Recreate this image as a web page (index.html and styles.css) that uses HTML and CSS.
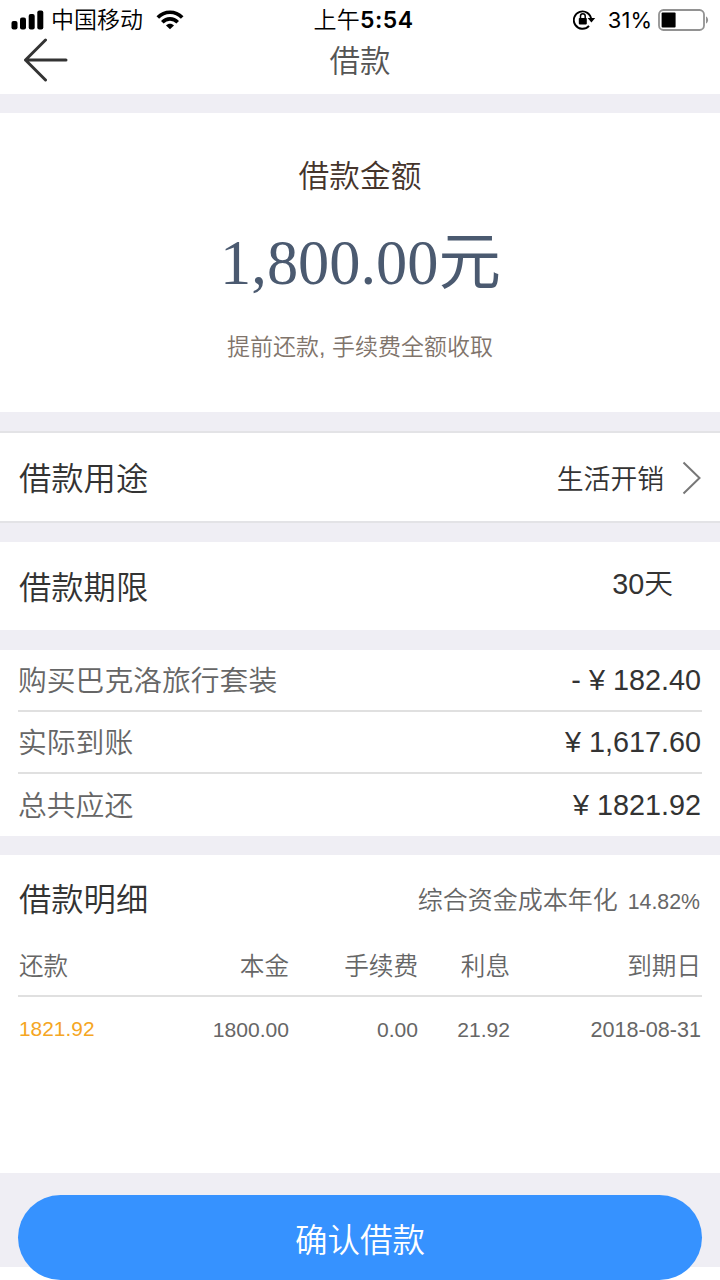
FILE: index.html
```html
<!DOCTYPE html>
<html lang="zh-CN">
<head>
<meta charset="utf-8">
<title>借款</title>
<link rel="stylesheet" href="styles.css">
</head>
<body>
<div class="app">
  <div class="status">
    <div class="status-left">
      <svg class="signal" width="33" height="20" viewBox="0 0 33 20"><rect x="0.500" y="11" width="6" height="8.500" rx="2"/><rect x="9" y="7.500" width="6" height="12" rx="2"/><rect x="17.700" y="4" width="6" height="15.500" rx="2"/><rect x="26.300" y="0.500" width="6" height="19" rx="2"/></svg>
      <span class="carrier">中国移动</span>
      <svg class="wifi" width="28" height="20" viewBox="0 0 28 20" fill="none" stroke="#000" stroke-width="3.600"><path d="M1.800 7.600C8.600.4 19.400.4 26.200 7.600"/><path d="M6.300 12.200C10.700 7.700 17.300 7.700 21.700 12.200"/><path d="M14 19.300l-4-3.900c2.200-2.200 5.800-2.200 8 0z" fill="#000" stroke="none"/></svg>
    </div>
    <div class="clock">上午<b>5:54</b></div>
    <div class="status-right">
      <svg class="lock" width="23" height="22" viewBox="0 0 23 22"><path d="M16 16.900A8.700 8.700 0 1 1 18.200 10.500" fill="none" stroke="#000" stroke-width="1.900"/><path d="M14.600 9h7.600l-3.800 4.600z"/><rect x="5.800" y="8.900" width="8" height="6.500" rx=".8"/><path d="M7.500 9.200V7.100a2.350 2.350 0 0 1 4.700 0v2.100" fill="none" stroke="#000" stroke-width="1.500"/></svg>
      <span class="percent">31%</span>
      <svg class="battery" width="52" height="22" viewBox="0 0 52 22"><rect x="1" y="1" width="45" height="20" rx="4.500" fill="#fff" stroke="#929292" stroke-width="1.800"/><rect x="3.600" y="3.500" width="14" height="15" rx="1"/><path d="M48 7.500c2.800 1.200 2.800 5.800 0 7z" fill="#929292"/></svg>
    </div>
  </div>
  <header class="nav">
    <svg class="back" width="46" height="44" viewBox="0 0 46 44" fill="none" stroke="#333" stroke-width="3" stroke-linecap="round" stroke-linejoin="round"><path d="M22.500 2 2.500 22l20 20M2.500 22H43"/></svg>
    <h1 class="title">借款</h1>
  </header>

  <section class="amount">
    <div class="amount-label">借款金额</div>
    <div class="amount-value">1,800.00元</div>
    <div class="amount-note">提前还款, 手续费全额收取</div>
  </section>

  <section class="row purpose">
    <span class="label">借款用途</span>
    <span class="choice">生活开销</span>
    <svg class="chevron" width="20" height="34" viewBox="0 0 20 34" fill="none" stroke="#777" stroke-width="2"><path d="M1.500 1.500 17.500 17l-16 15.500"/></svg>
  </section>

  <section class="row term">
    <span class="label">借款期限</span>
    <span class="days">30天</span>
  </section>

  <section class="summary">
    <div class="line"><span class="name">购买巴克洛旅行套装</span><span class="money">- ¥ 182.40</span></div>
    <div class="line"><span class="name">实际到账</span><span class="money">¥ 1,617.60</span></div>
    <div class="line"><span class="name">总共应还</span><span class="money">¥ 1821.92</span></div>
  </section>

  <section class="detail">
    <div class="detail-head">
      <span class="label">借款明细</span>
      <span class="rate">综合资金成本年化 <span class="num">14.82%</span></span>
    </div>
    <div class="grid heads"><span>还款</span><span>本金</span><span>手续费</span><span>利息</span><span>到期日</span></div>
    <div class="grid values"><span class="due">1821.92</span><span>1800.00</span><span>0.00</span><span>21.92</span><span class="date">2018-08-31</span></div>
  </section>

  <footer class="footer"><button class="confirm">确认借款</button></footer>
</div>
</body>
</html>
```

FILE: styles.css
```css
* { box-sizing: border-box; }
body {
  margin: 0;
  background: #fff;
  color: #333;
  font-family: "Liberation Sans", "Noto Sans CJK SC", sans-serif;
  font-weight: 350;
}
.app {
  display: flex;
  flex-direction: column;
  width: 720px;
  height: 1280px;
  overflow: hidden;
  background: linear-gradient(#efeef4 1267px, #fff 1267px);
}
.status {
  display: grid;
  grid-template-columns: 1fr auto 1fr;
  align-items: center;
  height: 40px;
  padding: 0 11px;
  background: #fff;
  color: #000;
  font-size: 23px;
  line-height: 40px;
}
.status-left, .status-right { display: flex; align-items: center; }
.status-right { justify-content: flex-end; }
.carrier { margin-left: 7px; }
.wifi { margin-left: 13px; }
.clock { margin-left: 7px; letter-spacing: .3px; }
.clock b { font-family: Inter, sans-serif; font-weight: 600; letter-spacing: .5px; }
.percent { margin: 0 6px 0 12px; font-family: Inter, sans-serif; font-size: 22px; font-weight: 400; }
.battery { margin-right: -1px; }
.nav {
  display: grid;
  grid-template-columns: 1fr auto 1fr;
  height: 54px;
  margin-bottom: 19px;
  padding: 0 23px;
  background: #fff;
}
.back { margin-top: -2px; }
.title { margin: 0; color: #555; font-size: 30.500px; font-weight: 350; line-height: 43px; }
.amount {
  height: 299px;
  margin-bottom: 19px;
  padding-top: 40px;
  background: #fff;
  text-align: center;
}
.amount-label { color: #45342b; font-size: 30.700px; line-height: 48px; }
.amount-value {
  margin-top: 22px;
  padding-left: 1px;
  color: #4b5a70;
  font-family: "Liberation Serif", "Noto Sans CJK SC", serif;
  font-size: 62.400px;
  font-weight: 400;
  line-height: 80px;
}
.amount-note { margin-top: 24px; color: #80746b; font-size: 23px; line-height: 40px; }
.row {
  display: flex;
  align-items: center;
  height: 88px;
  padding: 0 18px;
  background: #fff;
}
.label { margin: 0 auto 2px 1px; font-size: 32.300px; }
.purpose { height: 92px; border: solid #e3e3e6; border-width: 2px 0; margin-bottom: 19px; }
.choice { font-size: 26.800px; }
.chevron { margin: 2px 0 0 18px; }
.term { margin-bottom: 20px; padding-right: 47px; }
.days { margin-bottom: 10px; font-size: 28.800px; }
.summary { height: 186px; margin-bottom: 19px; padding: 0 18px; background: #fff; }
.line {
  display: flex;
  align-items: center;
  justify-content: space-between;
  height: 62px;
  border-bottom: 2px solid #e0e0e0;
  color: #666;
  font-size: 28.800px;
}
.line:last-child { border-bottom: 0; }
.name { margin-bottom: 3px; }
.money { margin-right: 1px; color: #333; }
.detail { height: 318px; margin-bottom: 22px; padding: 0 18px; background: #fff; }
.detail-head { display: flex; align-items: center; height: 86px; }
.rate { margin: 0 2px 1px 0; color: #666; font-size: 25px; }
.num { margin-left: 3px; font-size: 21.300px; }
.grid {
  display: grid;
  grid-template-columns: 130px 141px 129px 92px 1fr;
  align-items: center;
  padding-right: 1px;
  color: #666;
  text-align: right;
}
.grid span:first-child { padding-left: 1px; text-align: left; }
.heads { height: 56px; padding-bottom: 8px; border-bottom: 2px solid #e0e0e0; font-size: 24.600px; }
.values { height: 66px; font-size: 21.100px; }
.grid .due { margin-bottom: 3px; font-size: 20.900px; color: #f5a623; }
.date { font-size: 21.600px; }
.footer { padding: 0 18px; }
.confirm {
  display: block;
  width: 100%;
  height: 85px;
  border: 0;
  border-radius: 43px;
  background: #3692ff;
  color: #fff;
  font: inherit;
  font-size: 32.500px;
}
```
